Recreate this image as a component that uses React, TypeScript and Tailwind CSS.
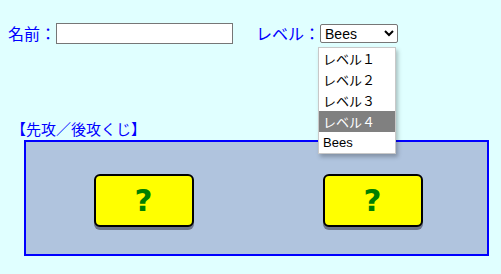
import React from "react";

const jp = "font-['Noto_Sans_CJK_JP','Noto_Sans',sans-serif]";

const options = ["レベル１", "レベル２", "レベル３", "レベル４", "Bees"];

const LotButton: React.FC = () => (
  <button className="flex h-[53px] w-[100px] items-center justify-center rounded-[6px] border-2 border-black bg-[#ffff00] shadow-[0_3px_0_#6b7388] font-['DejaVu_Sans',sans-serif] text-[31px] font-bold leading-none text-[#008000]">
    ?
  </button>
);

export default function App() {
  return (
    <div className={`relative min-h-[274px] w-[501px] bg-[#e0ffff] ${jp}`}>
      {/* Name and level row */}
      <div className="flex items-center pl-[8px] pt-[21px] text-[16px] text-[#0000ff]">
        <span>名前：</span>
        <input
          type="text"
          className="h-[21px] w-[177px] border border-[#767676] bg-white px-1 text-[13px] text-black outline-none"
        />
        <span className="ml-[23px]">レベル：</span>
        <select
          defaultValue="Bees"
          className="h-[19px] w-[78px] rounded-[2px] border border-[#767676] bg-white font-['Liberation_Sans',sans-serif] text-[14px] text-black"
        >
          {options.map((o) => (
            <option key={o}>{o}</option>
          ))}
        </select>
      </div>

      {/* Open dropdown list */}
      <div className="absolute left-[318px] top-[47px] w-[78px] border border-[#c8c8c8] bg-white text-[13px] text-black shadow-[2px_3px_4px_rgba(0,0,0,0.25)]">
        {options.map((o, i) => (
          <div
            key={o}
            className={`flex h-[21px] items-center pl-[4px] ${
              i === 3 ? "bg-[#808080] text-white" : ""
            } ${i === 4 ? "h-[18px] font-['Liberation_Sans',sans-serif]" : ""}`}
          >
            {o}
          </div>
        ))}
      </div>

      {/* Lot section */}
      <div className="mt-[73px] pl-[11px] text-[15px] leading-[22px] text-[#0000ff]">
        【先攻／後攻くじ】
      </div>
      <div className="ml-[24px] grid h-[116px] w-[465px] grid-cols-2 border-2 border-[#0000ff] bg-[#b0c4de] pl-[3px] pt-[32px]">
        <div className="flex justify-center">
          <LotButton />
        </div>
        <div className="flex justify-center">
          <LotButton />
        </div>
      </div>
    </div>
  );
}
